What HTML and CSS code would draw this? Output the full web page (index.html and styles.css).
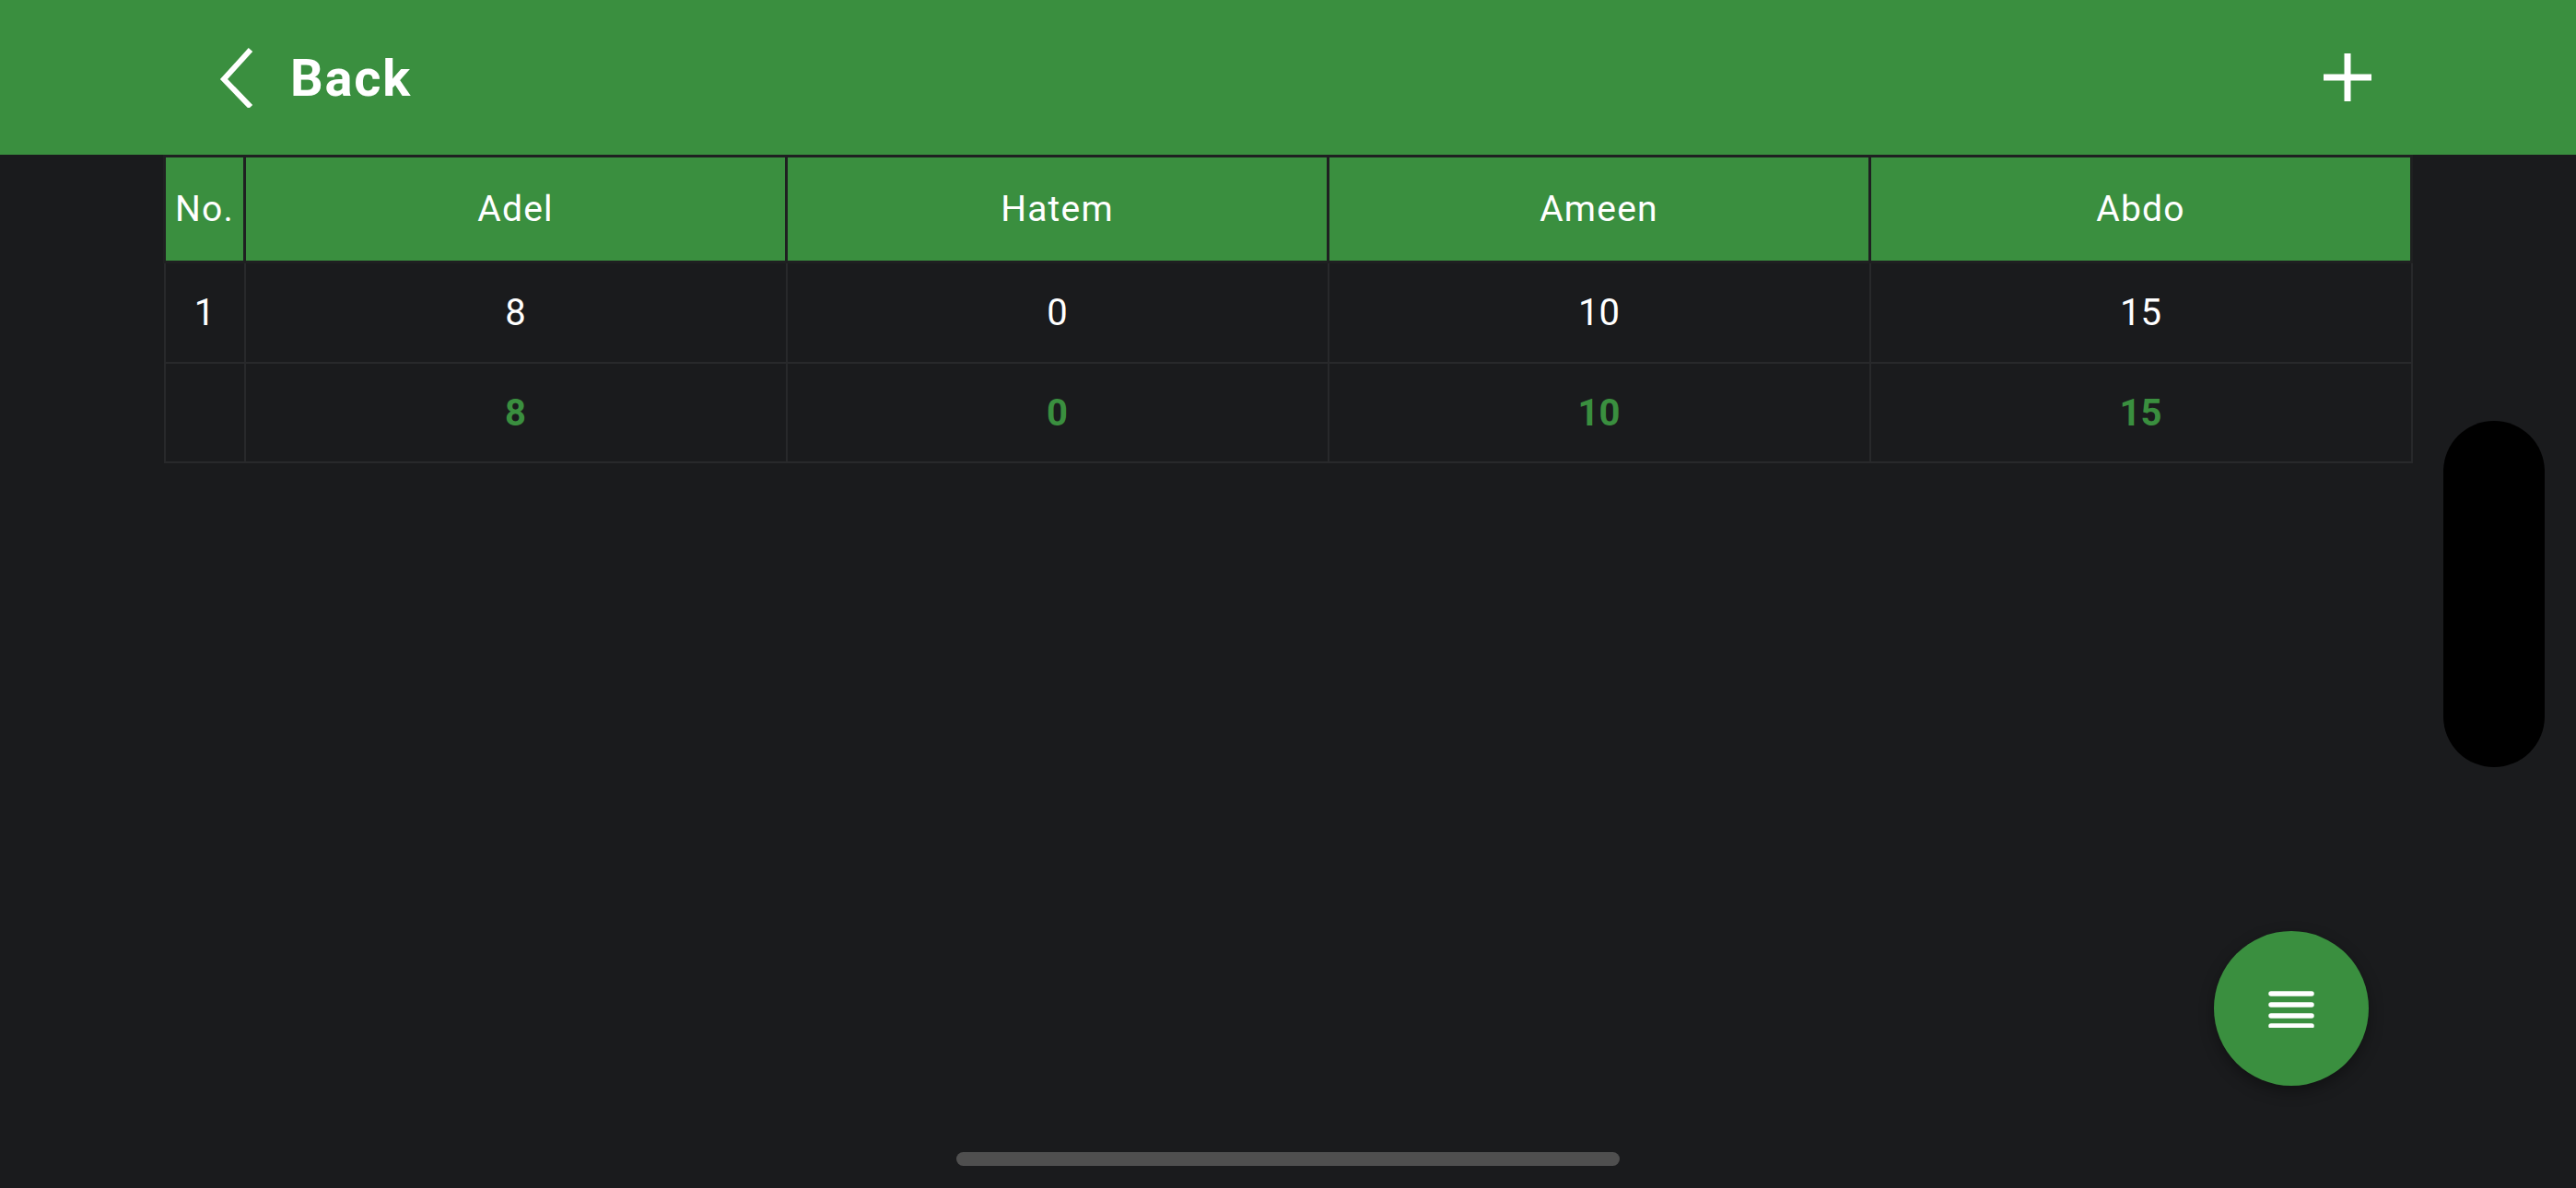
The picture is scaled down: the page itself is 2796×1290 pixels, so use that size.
FILE: index.html
```html
<!DOCTYPE html>
<html>
<head>
<meta charset="utf-8">
<link rel="stylesheet" href="styles.css">
</head>
<body>
<header class="topbar">
  <div class="back">
    <svg class="chev" width="40" height="66" viewBox="0 0 40 66"><polyline points="35,3 6,35 35,65" fill="none" stroke="#fff" stroke-width="6"/></svg>
    <span class="back-label">Back</span>
  </div>
  <svg class="plus" width="52" height="52" viewBox="0 0 52 52"><path d="M26 0V52M0 26H52" stroke="#fff" stroke-width="7"/></svg>
</header>
<main class="content">
  <table class="sheet">
    <colgroup><col class="c-no"><col><col><col><col></colgroup>
    <thead>
      <tr><th>No.</th><th>Adel</th><th>Hatem</th><th>Ameen</th><th>Abdo</th></tr>
    </thead>
    <tbody>
      <tr class="row"><td>1</td><td>8</td><td>0</td><td>10</td><td>15</td></tr>
      <tr class="total"><td></td><td>8</td><td>0</td><td>10</td><td>15</td></tr>
    </tbody>
  </table>
</main>
<div class="pill"></div>
<button class="fab"><svg width="50" height="42" viewBox="0 0 50 42"><path d="M3 5H47M3 17H47M3 29H47M3 40H47" stroke="#fff" stroke-width="5.5" stroke-linecap="round"/></svg></button>
<div class="home"></div>
</body>
</html>
```
FILE: styles.css
```css
html, body {
  margin: 0;
  padding: 0;
}
body {
  width: 2796px;
  height: 1290px;
  background: #1a1b1d;
  overflow: hidden;
  position: relative;
  font-family: Roboto, "Liberation Sans", sans-serif;
  color: #fff;
}
.topbar {
  height: 168px;
  background: #3a8f3f;
  display: flex;
  align-items: center;
  justify-content: space-between;
  padding: 0 222px 0 237px;
  box-sizing: border-box;
}
.back {
  display: flex;
  align-items: center;
}
.chev {
  display: block;
}
.back-label {
  font-weight: 700;
  font-size: 56px;
  letter-spacing: 1.8px;
  margin-left: 38px;
  line-height: 1;
  margin-top: 2px;
}
.plus {
  display: block;
}
.content {
  padding-left: 177px;
}
.sheet {
  width: 2442px;
  border-collapse: collapse;
  table-layout: fixed;
}
.c-no {
  width: 87px;
}
.sheet th {
  background: #3a8f3f;
  height: 112px;
  border: 3px solid #1f2021;
  font-weight: 400;
  font-size: 39px;
  letter-spacing: 1.2px;
  padding: 0;
  text-align: center;
}
.sheet td {
  border: 2px solid #28292b;
  text-align: center;
  padding: 0;
  font-size: 40px;
}
.row td {
  height: 107px;
}
.total td {
  height: 106px;
  color: #3a8f3f;
  font-weight: 700;
}
.pill {
  position: absolute;
  left: 2652px;
  top: 457px;
  width: 110px;
  height: 376px;
  border-radius: 55px;
  background: #000;
}
.fab {
  position: absolute;
  left: 2403px;
  top: 1011px;
  width: 168px;
  height: 168px;
  border-radius: 50%;
  border: 0;
  padding: 0;
  background: #3a8f3f;
  box-shadow: 0 6px 16px rgba(0,0,0,0.35);
  display: flex;
  align-items: center;
  justify-content: center;
}
.fab svg {
  display: block;
}
.home {
  position: absolute;
  left: 1038px;
  top: 1251px;
  width: 720px;
  height: 15px;
  border-radius: 8px;
  background: #4f4f4f;
}
```
